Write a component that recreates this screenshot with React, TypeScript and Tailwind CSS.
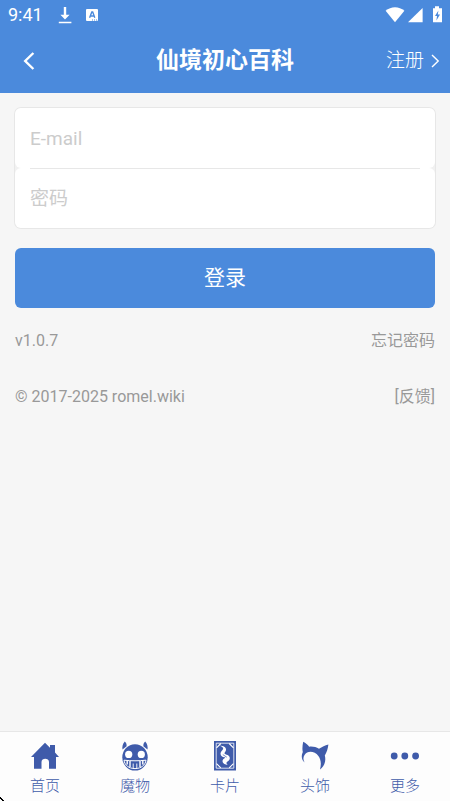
import type { ReactNode } from "react";

function StatusBar() {
  return (
    <div className="flex h-[30px] items-center justify-between px-2">
      <div className="flex items-center">
        <span className="w-[50px] text-lg leading-6">9:41</span>
        <svg className="mr-[14px] h-[18px] w-[14px]" viewBox="0 0 14 18" fill="currentColor" aria-hidden="true">
          <path d="M5.8 1h2.4v7.8h3.4L7 13.4 2.4 8.8h3.4zM.8 15.8h12.6v1.4H.8z" />
        </svg>
        <svg className="size-3" viewBox="0 0 12 12" aria-hidden="true">
          <rect width="12" height="12" rx="1" fill="#fff" />
          <path d="M3.6 8.8 5.8 3h.9l2.1 5.8M4.3 7h3.8" fill="none" stroke="#4b8adc" strokeWidth="1.4" />
          <path d="M6 11h1M8 11h1M10 11h1" stroke="#4b8adc" strokeWidth="1" />
        </svg>
      </div>
      <svg className="h-[18px] w-[58px]" viewBox="0 0 58 18" fill="#fff" aria-hidden="true">
        <path d="M1.6 4.8C7-.1 15-.1 20.4 4.8L11 16.2z" />
        <path d="M24 16.2 38.6 2v14.2z" />
        <path d="M51 .2h4v2h3v14h-9v-14h2z" />
        <path d="M54.4 4.5 51 10h2l-.6 4.4L56 8.6h-2.2z" fill="#4b8adc" />
      </svg>
    </div>
  );
}

function HomeIcon() {
  return (
    <svg className="size-[30px]" viewBox="0 0 30 30" fill="currentColor" aria-hidden="true">
      <path d="M15 1.8 20 6.7V4h5v7.5L29 16h-3v11.8h-7V21c0-4.4-7.5-4.4-7.5 0v6.8H4V16H1z" />
    </svg>
  );
}

function MonsterIcon() {
  return (
    <svg className="size-[30px]" viewBox="0 0 30 30" fill="currentColor" aria-hidden="true">
      <path d="M4.8.4C2.7 2.2 2 5.7 2.5 8.6L6.6 5.2C6.8 3.2 6.2 1.4 4.8.4zM25.2.4c2.1 1.8 2.8 5.3 2.3 8.2l-4.1-3.4c-.2-2 .4-3.8 1.8-4.8z" />
      <ellipse cx="15" cy="16.4" rx="12.7" ry="13.2" />
      <circle cx="8.7" cy="13.4" r="3.6" fill="#fff" />
      <circle cx="21.3" cy="13.4" r="3.6" fill="#fff" />
      <g fill="none" stroke="#fff">
        <path d="M4 19.2c6.7.8 15.3.8 22 0-.6 4.8-4.8 8.4-11 8.4S4.6 24 4 19.2z" />
        <path d="M7.2 19.5v4M10 20v6M20 20v6M22.8 19.5v4" strokeWidth="1.4" />
        <path d="M13.2 22.5v5M16.8 22.5v5" strokeWidth=".9" />
      </g>
    </svg>
  );
}

function CardIcon() {
  return (
    <svg className="size-[30px]" viewBox="0 0 30 30" aria-hidden="true">
      <path d="M4 0h22v29.5H4z" fill="currentColor" />
      <path d="M6.2 2.2h17.6v25H6.2z" fill="none" stroke="#fff" strokeWidth=".8" />
      <path d="M6.5 6.8 10.8 2.5M19.2 2.5l4.3 4.3M6.5 22.6l4.3 4.3M19.2 26.9l4.3-4.3" stroke="#fff" strokeWidth="1.1" />
      <path d="M9.6 4.8c4.4-.1 7.3 2.1 6.2 5-.6 1.5-1.8 2-1.1 3 .9 1 5.2 1.2 5.1 4.5-.1 2-1.5 2.6-2.9 3.8-.9.8-.3 2 .9 2.8-4-.3-6-2.5-5-4.9.6-1.5 2.4-1.9 2.6-2.8-2 .7-4.8-.8-4.9-3.4-.1-2.2 2.1-3.2 2.6-4.7.4-1.3-1-2.5-3.5-3.3z" fill="#fff" />
      <path d="m12.8 13.6 4 2.6" stroke="currentColor" strokeWidth=".7" />
    </svg>
  );
}

function HeadgearIcon() {
  return (
    <svg className="size-[30px]" viewBox="0 0 30 30" fill="currentColor" aria-hidden="true">
      <path d="M3.2.7c2.5 1.4 4.6 2.9 6 5 3.7-.4 6.9.4 9.8 2 3.1-1.8 5.9-3.4 9.4-4.2-.5 4.3-1.7 8-3.6 11 1.6 5.8-.7 10.8-4.8 14 1.3-5 1.2-9.9-1.6-13.6-3.8-4.9-10.9-5.5-13.9-1-1.6 2.7-1.3 5 .1 7.7-2.6-2-3.9-6.3-1.8-10.7C2.1 8.2 2.4 4.6 3.2.7z" />
    </svg>
  );
}

function MoreIcon() {
  return (
    <svg className="size-[30px]" viewBox="0 0 30 30" fill="currentColor" aria-hidden="true">
      <circle cx="4.2" cy="15" r="3.4" />
      <circle cx="14.8" cy="15" r="3.4" />
      <circle cx="25.6" cy="15" r="3.4" />
    </svg>
  );
}

const tabs: { label: string; icon: ReactNode }[] = [
  { label: "首页", icon: <HomeIcon /> },
  { label: "魔物", icon: <MonsterIcon /> },
  { label: "卡片", icon: <CardIcon /> },
  { label: "头饰", icon: <HeadgearIcon /> },
  { label: "更多", icon: <MoreIcon /> },
];

export default function App() {
  return (
    <div className="relative flex min-h-screen flex-col bg-[#f6f6f6] font-[Roboto,'Noto_Sans_CJK_SC',sans-serif]">
      <header className="bg-[#4b8adc] text-white">
        <StatusBar />
        <div className="grid h-[63px] grid-cols-[1fr_auto_1fr] items-center px-2 pb-px">
          <button type="button" aria-label="返回" className="ml-3 size-[18px]">
            <svg className="size-[18px]" viewBox="0 0 18 18" fill="none" stroke="currentColor" strokeWidth="2.4" aria-hidden="true">
              <path d="M13.4 1 5.2 9l8.2 8" />
            </svg>
          </button>
          <h1 className="text-[23px] leading-8 font-bold">仙境初心百科</h1>
          <a href="#register" className="flex items-center gap-1 justify-self-end text-[19px] leading-7 font-light">
            注册
            <svg className="size-[14px]" viewBox="0 0 14 14" fill="none" stroke="currentColor" strokeWidth="1.4" aria-hidden="true">
              <path d="m4 1 6.2 6L4 13" />
            </svg>
          </a>
        </div>
      </header>

      <main className="flex-1 px-[15px] pt-[15px] text-base leading-[26px] text-[#999]">
        <form onSubmit={(event) => event.preventDefault()}>
          <div className="rounded-md bg-[#f1f1f1] ring-1 ring-[#e7e7e7]">
            <input
              type="email"
              aria-label="E-mail"
              placeholder="E-mail"
              className="block h-[60px] w-full rounded-md bg-white px-[15px] text-[19px] text-gray-700 outline-none placeholder:text-[#ccc]"
            />
            <div className="relative rounded-md bg-white before:absolute before:inset-x-[15px] before:top-0 before:h-px before:bg-[#e7e7e7]">
              <input
                type="password"
                aria-label="密码"
                placeholder="密码"
                className="block h-[60px] w-full bg-transparent px-[15px] text-[19px] text-gray-700 outline-none placeholder:text-[#ccc]"
              />
            </div>
          </div>
          <button type="submit" className="mt-5 block h-[60px] w-full rounded-md bg-[#4b8adc] text-[21px] text-white">
            登录
          </button>
        </form>
        <div className="mt-5 flex justify-between">
          <span>v1.0.7</span>
          <a href="#forgot">忘记密码</a>
        </div>
        <div className="mt-[30px] flex justify-between">
          <span>© 2017-2025 romel.wiki</span>
          <a href="#feedback">[反馈]</a>
        </div>
      </main>

      <nav className="sticky bottom-0 grid h-[70px] grid-cols-5 border-t border-[#e7e7e7] bg-[#fdfdfd] text-[#3f5baa]">
        {tabs.map((tab) => (
          <a key={tab.label} href={`#${tab.label}`} className="flex flex-col items-center pt-[9px] text-[15px] leading-[30px] font-light">
            {tab.icon}
            <span>{tab.label}</span>
          </a>
        ))}
        <svg className="absolute bottom-0 left-0 size-[6px]" viewBox="0 0 6 6" aria-hidden="true">
          <path d="M0 2h1v1h1v1h1v1h1v1H2V5H1V4H0z" fill="#000" />
        </svg>
      </nav>
    </div>
  );
}
